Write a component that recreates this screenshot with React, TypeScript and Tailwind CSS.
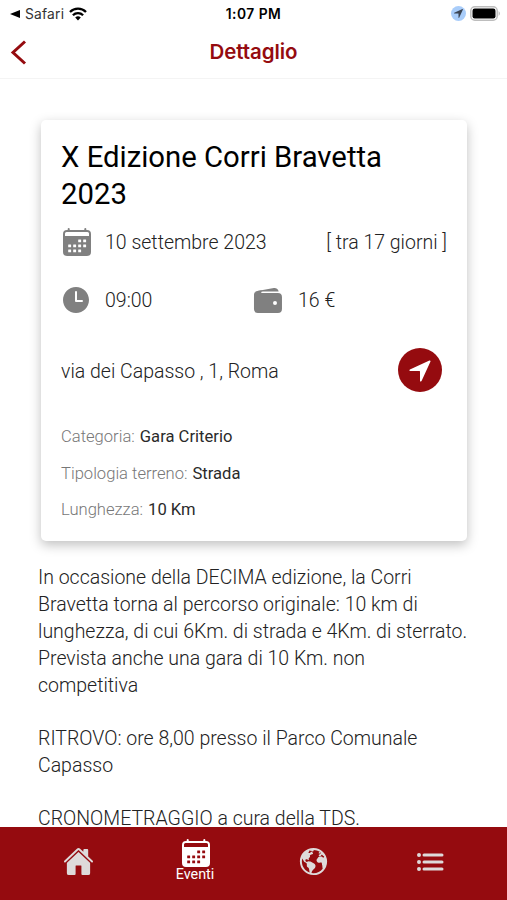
import type { ReactNode } from 'react'
import { IoEarth, IoHome, IoList, IoNavigate, IoTime, IoWallet } from 'react-icons/io5'

const DETAILS = [
  { label: 'Categoria', value: 'Gara Criterio' },
  { label: 'Tipologia terreno', value: 'Strada' },
  { label: 'Lunghezza', value: '10 Km' },
]

// column, row of each day square
const DAYS = [
  [3, 0],
  [4, 0],
  [1, 1],
  [2, 1],
  [3, 1],
  [4, 1],
  [1, 2],
  [2, 2],
  [3, 2],
]

export default function App() {
  return (
    <div className="flex h-[900px] w-[507px] flex-col overflow-hidden bg-white font-['Roboto',sans-serif]">
      <StatusBar />
      <header className="grid h-[51px] shrink-0 grid-cols-[1fr_auto_1fr] items-center border-b border-[#f4f4f4]">
        <svg viewBox="0 0 18 28" className="ml-[10px] h-7 w-[18px]" fill="none">
          <path d="M15 2.5 L3 13.5 L15 24.5" stroke="#950b0f" strokeWidth="3" />
        </svg>
        <h1 className="-mt-px font-['Inter',sans-serif] text-[20.5px] font-semibold tracking-[-0.1px] text-[#950b0f]">
          Dettaglio
        </h1>
      </header>

      <main className="min-h-0 flex-1">
        <EventCard />
        <div className="mt-[23px] ml-[38px] w-[435px] text-[19.5px] leading-[27px] font-light text-[#222]">
          <p>
            In occasione della DECIMA edizione, la Corri
            <br />
            Bravetta torna al percorso originale: 10 km di
            <br />
            lunghezza, di cui 6Km. di strada e 4Km. di sterrato.
            <br />
            Prevista anche una gara di 10 Km. non
            <br />
            competitiva
          </p>
          <p className="mt-[26px]">
            RITROVO: ore 8,00 presso il Parco Comunale
            <br />
            Capasso
          </p>
          <p className="mt-[31px] h-[18px] leading-[18px]">CRONOMETRAGGIO a cura della TDS.</p>
        </div>
      </main>

      <nav className="grid h-[73px] shrink-0 grid-cols-[117px_117px_119px_115px] bg-[#950b0f] pl-[19px] text-[#dedada]">
        <Tab>
          <IoHome className="ml-px mt-[19px] size-[31px]" />
        </Tab>
        <Tab>
          <CalendarIcon className="ml-[2px] mt-[11px] h-[30px] w-[30px] text-white" />
          <span className="ml-px text-[14.4px] leading-[14px] text-white">Eventi</span>
        </Tab>
        <Tab>
          <IoEarth className="ml-px mt-[19px] size-[31px]" />
        </Tab>
        <Tab>
          <IoList className="ml-px mt-[19px] size-[32px]" />
        </Tab>
      </nav>
    </div>
  )
}

function StatusBar() {
  return (
    <div className="grid h-7 shrink-0 grid-cols-[1fr_auto_1fr] items-center font-['Inter',sans-serif] text-black">
      <div className="flex items-center pl-[10px]">
        <svg viewBox="0 0 10 8" className="h-2 w-[10px]">
          <path d="M0 4 L10 0 V8 Z" />
        </svg>
        <span className="ml-[5px] text-[13.8px] tracking-[0.2px] text-[#333]">Safari</span>
        <svg viewBox="0 0 18 14" className="-mt-px ml-[5px] h-[14px] w-[18px]" fill="none" stroke="#000" strokeWidth="2.3">
          <path d="M1 5 A11.3 11.3 0 0 1 17 5" />
          <path d="M3.9 8.2 A7.2 7.2 0 0 1 14.1 8.2" />
          <path d="M6.2 10.5 A4 4 0 0 1 11.8 10.5 L9 13.6 Z" fill="#000" stroke="none" />
        </svg>
      </div>
      <span className="text-[13.8px] font-semibold tracking-[0.5px]">1:07 PM</span>
      <div className="flex items-center justify-end pr-[6px]">
        <div className="-mt-px grid size-[15px] place-items-center rounded-full bg-[#a9cdfa]">
          <IoNavigate className="size-[11px] text-[#3b4554]" />
        </div>
        <svg viewBox="0 0 31 15" className="-mt-px ml-[4px] h-[15px] w-[31px]">
          <rect x="0.8" y="0.8" width="26.4" height="13.4" rx="4" fill="#fff" stroke="#bdbdbd" strokeWidth="1.5" />
          <rect x="2.5" y="2.5" width="23" height="10" rx="2.2" />
          <path d="M28.7 5 Q30.8 7.5 28.7 10 Z" fill="#aaa" />
        </svg>
      </div>
    </div>
  )
}

function EventCard() {
  return (
    <section className="mt-[41px] ml-[41px] h-[421px] w-[426px] rounded-[5px] bg-white px-5 pt-[19px] text-[19.5px] font-light text-[#222] shadow-[0_4px_12px_rgba(0,0,0,0.25)]">
      <h2 className="h-[73px] text-[29.3px] leading-[36.5px] font-normal text-black">
        X Edizione Corri Bravetta
        <br />
        2023
      </h2>
      <div className="mt-[15px] flex h-8 items-center">
        <CalendarIcon className="-mt-[3px] ml-px h-[30px] w-[30px] text-[#808080]" />
        <span className="ml-[13px]">10 settembre 2023</span>
        <span className="ml-auto">[ tra 17 giorni ]</span>
      </div>
      <div className="mt-[26px] grid h-8 grid-cols-[192px_1fr]">
        <div className="flex items-center">
          <IoTime className="-mt-[2px] -ml-px size-[32px] text-[#808080]" />
          <span className="ml-[13px]">09:00</span>
        </div>
        <div className="flex items-center">
          <IoWallet className="-mt-px -ml-px size-[32px] text-[#808080]" />
          <span className="ml-[14px]">16 €</span>
        </div>
      </div>
      <div className="mt-[31px] flex h-11 items-center justify-between pr-[5px]">
        <span className="mt-[4px]">via dei Capasso , 1, Roma</span>
        <button className="grid size-11 place-items-center rounded-full bg-[#950b0f] text-white">
          <IoNavigate className="mt-px -ml-px size-[26px]" />
        </button>
      </div>
      <dl className="mt-[27px] text-[16.6px]">
        {DETAILS.map((d) => (
          <div key={d.label} className="flex h-[36.7px] items-center gap-[5px]">
            <dt className="text-[#777]">{d.label}:</dt>
            <dd className="font-normal text-[#2a2a2a]">{d.value}</dd>
          </div>
        ))}
      </dl>
    </section>
  )
}

function Tab({ children }: { children: ReactNode }) {
  return <button className="flex flex-col items-center justify-start">{children}</button>
}

function CalendarIcon({ className }: { className: string }) {
  return (
    <svg viewBox="0 0 30 30" className={className} fill="currentColor">
      <path
        fillRule="evenodd"
        d="M5 3 H25 Q29 3 29 7 V25 Q29 29 25 29 H5 Q1 29 1 25 V7 Q1 3 5 3 Z M4.5 5 Q3 5 3 6.5 V9 H27 V6.5 Q27 5 25.5 5 Z"
      />
      <rect x="5.7" y="1" width="2" height="4" rx="1" />
      <rect x="22.3" y="1" width="2" height="4" rx="1" />
      {DAYS.map(([col, row]) => (
        <rect
          key={`${col}-${row}`}
          x={1.2 + col * 5}
          y={12.4 + row * 5}
          width="2.9"
          height="2.9"
          rx="0.4"
          className={className.includes('text-white') ? 'fill-[#950b0f]' : 'fill-white'}
        />
      ))}
    </svg>
  )
}
